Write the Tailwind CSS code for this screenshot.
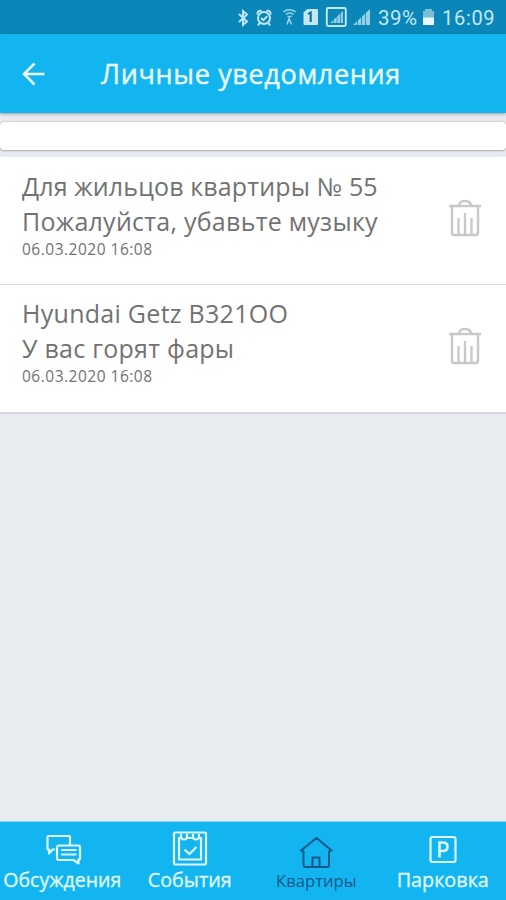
<!DOCTYPE html>
<html lang="ru">
<head>
<meta charset="utf-8">
<title>Личные уведомления</title>
<script src="https://cdn.jsdelivr.net/npm/@tailwindcss/browser@4"></script>
</head>
<body class="w-[506px] h-[900px] overflow-hidden bg-[#e8ecf1] font-['Open_Sans','Noto_Sans',sans-serif] flex flex-col whitespace-nowrap">
<div class="h-[34px] shrink-0 bg-[#0a87b8] flex items-center justify-end pr-[11px] pt-[2px] text-[#c3e8f5] font-[Roboto,sans-serif]">
  <svg class="w-[142px] h-[34px] -mt-[2px] shrink-0" viewBox="232 0 142 34" fill="none" stroke="currentColor" stroke-width="1.900">
    <path d="M239 14l8 7.500-4 3.500V11l4 3.500-8 7.500"/>
    <circle cx="264" cy="18" r="6"/><path d="M261 18l2.300 2.200 4-4M257.500 14.500c-.5-3 1.500-4.500 4-3.500M270.500 14.500c.5-3-1.500-4.500-4-3.500M259.500 23l-1.500 2.500M268.500 23l1.500 2.500"/>
    <g stroke-width="1.500" opacity=".8"><path d="M283.500 12c3-3 9.500-3 12 0M286 14.500c2-2 5.500-2 7.500 0M287 24.500l2-6 2.500 6M287.500 16.500h4"/></g>
    <path fill="currentColor" stroke="none" d="M303.500 12.500l4-3.500h9.500q1 0 1 1v14q0 1-1 1h-12.500q-1 0-1-1z"/><path stroke="#0a6c95" stroke-width="2" d="M308 14l2.700-1.500V22"/>
    <rect x="326.800" y="8" width="19" height="18" rx="1.500"/>
    <path opacity=".75" fill="currentColor" stroke="none" d="M330 23l13-12v12z"/><path stroke="#0a87b8" stroke-width=".7" d="M333.500 18v6M337 14v10M340.500 12v12"/>
    <path opacity=".75" fill="currentColor" stroke="none" d="M353 25l17-16v16z"/><path stroke="#0a87b8" stroke-width=".8" d="M357.500 19v7M361.500 15v11M365.500 11v15"/>
  </svg>
  <span class="text-[20.500px] leading-6 w-[40px] ml-[4px] mr-[4px] tracking-[0.500px]">39%</span>
  <svg class="w-[13px] h-[17px] mr-[7px] -mt-[3px]" viewBox="0 0 13 17"><path fill="#79bdd7" d="M3 1h7v2h2v7H1V3h2z"/><path fill="#e9f8fc" d="M1 9.500h11V17H1z"/></svg>
  <span class="text-[20px] leading-6 w-[53px] tracking-[0.700px]">16:09</span>
</div>
<header class="relative h-[79px] shrink-0 bg-[#12b5f0] shadow-[0_1px_3px_rgba(0,0,0,0.35)] flex items-center text-[#eafaff]">
  <svg class="w-[24px] h-[24px] ml-[21px]" viewBox="0 0 24 24" fill="none" stroke="#eafaff" stroke-width="2.500"><path d="M13.500 1.500L3 12l10.500 10.500M2.500 12h21"/></svg>
  <h1 class="ml-[56px] text-[27px] leading-9 tracking-[0.660px] [-webkit-text-stroke:0.400px_#eafaff]">Личные уведомления</h1>
</header>
<div class="mt-[9px] h-[28px] shrink-0 rounded-[4px] bg-white shadow-[0_0_2px_rgba(0,0,0,0.3),0_1px_2px_rgba(0,0,0,0.2)]"></div>
<main class="mt-[7px] flex-1 text-[#727272]">
  <article class="h-[128px] bg-white border-b-[1.500px] border-[#dedfe1] flex justify-between pl-[22px] pr-[24px] pt-[12px]">
    <div><p class="text-[25px] leading-[34.500px] tracking-[0.140px]">Для жильцов квартиры № 55</p><p class="text-[25px] leading-[34.500px] tracking-[0.260px]">Пожалуйста, убавьте музыку</p><p class="text-[15.500px] leading-[22px] tracking-[0.500px]">06.03.2020 16:08</p></div>
    <svg class="w-[34px] h-[40px] mt-[29px]" viewBox="0 0 34 40" fill="none" stroke="#c9c9c9" stroke-width="2.400"><path d="M1 8h32M4 9v26q0 2 2 2h22q2 0 2-2V9M11 8q0-5 6-5t6 5"/><path d="M10.500 20v16M17 15v21M23.500 20v16"/></svg>
  </article>
  <article class="h-[129px] bg-white border-b-2 border-[#d6d8da] flex justify-between pl-[22px] pr-[24px] pt-[11px]">
    <div><p class="text-[25px] leading-[34.500px] tracking-[0.280px]">Hyundai Getz B321OO</p><p class="text-[25px] leading-[34.500px] tracking-[0.260px]">У вас горят фары</p><p class="text-[15.500px] leading-[22px] tracking-[0.500px]">06.03.2020 16:08</p></div>
    <svg class="w-[34px] h-[40px] mt-[30px]" viewBox="0 0 34 40" fill="none" stroke="#c9c9c9" stroke-width="2.400"><path d="M1 8h32M4 9v26q0 2 2 2h22q2 0 2-2V9M11 8q0-5 6-5t6 5"/><path d="M10.500 20v16M17 15v21M23.500 20v16"/></svg>
  </article>
</main>
<nav class="h-[79px] shrink-0 bg-[#12b5f0] border-t border-[#8fd4ea] grid grid-cols-4 text-center text-[#dff7ff] text-[20px] leading-7">
  <div class="flex flex-col items-center pt-[9px]">
    <svg class="w-[38px] h-[35px] shrink-0" viewBox="0 0 38 35" fill="none" stroke="currentColor" stroke-width="2.200" stroke-linejoin="round"><path d="M11 18.500H8.500L5 22.500v-4H3.500V6q0-1 1-1H25q1 0 1 1v7.500M13.500 14.500h21q1.500 0 1.500 1.500v11q0 1.500-1.500 1.500v4l-5-3.500H15q-2 0-2-2V14.500M17 19h15.500M17 23.500h15.500"/></svg>
    <span class="text-[19.500px] -translate-x-[1px] [-webkit-text-stroke:0.350px_#dff7ff]">Обсуждения</span>
  </div>
  <div class="flex flex-col items-center pt-[9px]">
    <svg class="w-[36px] h-[35px] shrink-0" viewBox="0 0 36 35" fill="none" stroke="currentColor" stroke-width="2.200"><rect x="2" y="1.500" width="32" height="32" rx="1"/><path d="M9 7H7v21.500h22V7h-2M15 7h6M12.500 18.500l5 4.500 7-7"/><path d="M9 3v2.500q0 3 3 3t3-3V3M21 3v2.500q0 3 3 3t3-3V3"/></svg>
    <span class="text-[19.700px] [-webkit-text-stroke:0.350px_#dff7ff]">События</span>
  </div>
  <div class="flex flex-col items-center pt-[9px] text-[#16588a]">
    <svg class="w-[36px] h-[37px] shrink-0" viewBox="0 0 36 37" fill="none" stroke="currentColor" stroke-width="2" stroke-linejoin="round"><path d="M5.500 20.500l-2.500-1L18.500 7l15 12.500-2.500 1V34q0 2-2 2H7.500q-2 0-2-2zM14.500 36v-9.500h7V36"/></svg>
    <span class="text-[16.600px] leading-[26px]">Квартиры</span>
  </div>
  <div class="flex flex-col items-center pt-[9px]">
    <svg class="w-[30px] h-[35px] shrink-0" viewBox="0 0 30 35" fill="none" stroke="currentColor" stroke-width="2.200"><rect x="2.500" y="6" width="25" height="25" rx="2"/><path d="M11.500 26.500V11.500h3.500q4.500 0 4.500 4.200T15 20h-3.500" stroke-width="2.600"/></svg>
    <span class="text-[19.800px] [-webkit-text-stroke:0.350px_#dff7ff]">Парковка</span>
  </div>
</nav>
</body>
</html>
